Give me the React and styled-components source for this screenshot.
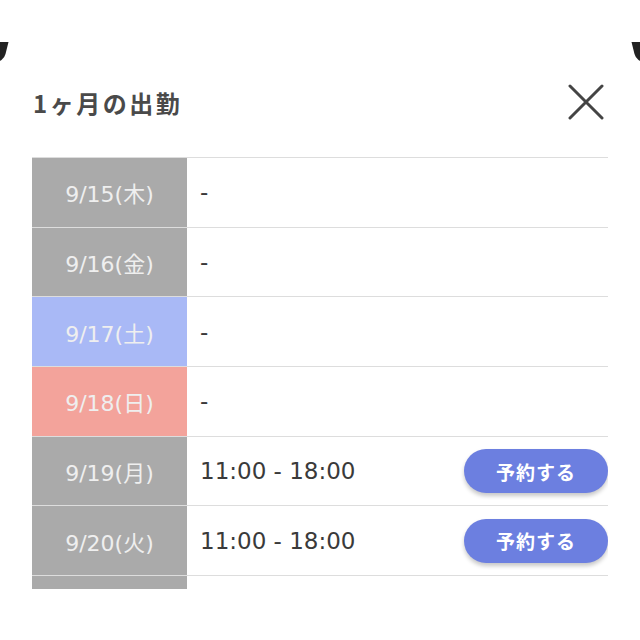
import styled, { createGlobalStyle } from "styled-components"

const Global = createGlobalStyle`
  html, body { margin: 0; padding: 0; background: #fff; }
  body { font-family: "DejaVu Sans", "Noto Sans CJK JP", sans-serif; }
`

const Page = styled.div`
  position: relative;
  width: 640px;
  height: 640px;
  overflow: hidden;
  background: #fff;
`

const Corner = styled.div`
  position: absolute;
  top: 42px;
  ${p => (p.$side === "left" ? "left: -5px;" : "right: -5px;")}
  width: 11px;
  height: 20px;
  background: #222;
  border-radius: ${p => (p.$side === "left" ? "0 0 8px 0" : "0 0 0 8px")};
  transform: ${p => (p.$side === "left" ? "skewX(-14deg)" : "skewX(14deg)")};
`

const Modal = styled.div`
  padding: 80px 32px 0 32px;
`

const Header = styled.div`
  display: flex;
  align-items: center;
  justify-content: space-between;
  height: 44px;
  padding-left: 1px;
`

const Title = styled.h2`
  margin: 0;
  font-family: "Noto Sans CJK JP", sans-serif;
  font-size: 24px;
  font-weight: 700;
  color: #4a4a4a;
  letter-spacing: 2.5px;
`

const Close = styled.button`
  border: 0;
  background: none;
  padding: 0;
  width: 40px;
  height: 40px;
  margin-right: 2px;
  display: flex;
  align-items: center;
  justify-content: center;
`

const List = styled.div`
  margin-top: 33px;
  height: 431px;
  overflow: hidden;
  border-top: 1px solid #ddd;
`

const Row = styled.div`
  display: grid;
  grid-template-columns: 155px 1fr;
  height: 69.7px;
  box-sizing: border-box;
  border-bottom: 1px solid #ddd;
`

const DateCell = styled.div`
  display: flex;
  align-items: center;
  justify-content: center;
  background: ${p => p.$bg};
  color: #efefef;
  font-size: 22px;
  font-weight: 400;
`

const Body = styled.div`
  display: flex;
  align-items: center;
  justify-content: space-between;
  padding-left: 13px;
  color: #3a3a3a;
  font-size: 23px;
  font-weight: 400;
`

const Reserve = styled.button`
  width: 144px;
  height: 44px;
  border: 0;
  border-radius: 22px;
  background: #6c7fe0;
  color: #fff;
  font-family: "Noto Sans CJK JP", sans-serif;
  font-size: 19px;
  font-weight: 700;
  letter-spacing: 1px;
  box-shadow: 0 3px 4px rgba(0, 0, 0, 0.22);
`

const colors = {
  normal: "#aaaaaa",
  sat: "#a9b9f6",
  sun: "#f3a39b",
}

const days = [
  { id: 1, date: "9/15(木)", kind: "normal", time: null },
  { id: 2, date: "9/16(金)", kind: "normal", time: null },
  { id: 3, date: "9/17(土)", kind: "sat", time: null },
  { id: 4, date: "9/18(日)", kind: "sun", time: null },
  { id: 5, date: "9/19(月)", kind: "normal", time: "11:00 - 18:00" },
  { id: 6, date: "9/20(火)", kind: "normal", time: "11:00 - 18:00" },
  { id: 7, date: "", kind: "normal", time: null, empty: true },
]

const App = () => {
  return (
    <Page>
      <Global />
      <Corner $side="left" />
      <Corner $side="right" />
      <Modal>
        <Header>
          <Title>1ヶ月の出勤</Title>
          <Close aria-label="close">
            <svg width="36" height="36" viewBox="0 0 36 36">
              <path d="M2 2 L34 34 M34 2 L2 34" stroke="#444" strokeWidth="3" strokeLinecap="round" />
            </svg>
          </Close>
        </Header>
        <List>
          {days.map(d => (
            <Row key={d.id}>
              <DateCell $bg={colors[d.kind]}>{d.date}</DateCell>
              <Body>
                {!d.empty && <span>{d.time ? d.time : "-"}</span>}
                {d.time && <Reserve>予約する</Reserve>}
              </Body>
            </Row>
          ))}
        </List>
      </Modal>
    </Page>
  )
}

export default App
